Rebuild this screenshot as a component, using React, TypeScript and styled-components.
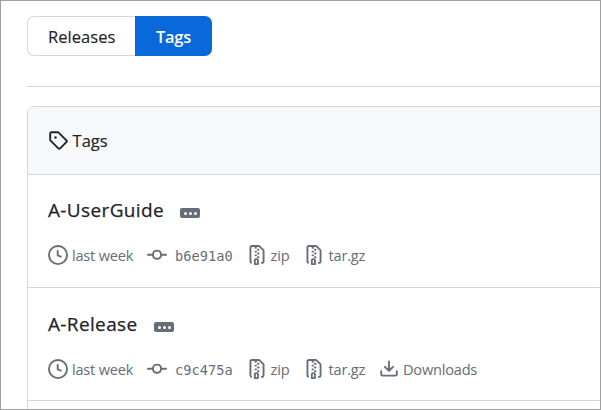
import React from "react";
import styled, { createGlobalStyle } from "styled-components";

const GlobalStyle = createGlobalStyle`
  * { box-sizing: border-box; }
  body {
    margin: 0;
    background: #fff;
    color: #1f2328;
    font-family: "Open Sans", "Noto Sans", sans-serif;
  }
`;

const Frame = styled.main`
  width: 601px;
  height: 410px;
  padding: 15px 0 0 26px;
  border: 1px solid #a0a0a0;
  overflow: hidden;
`;

const Tabs = styled.nav`
  display: flex;
  width: 185px;
  height: 40px;
`;

const Tab = styled.button<{ $active?: boolean }>`
  width: ${(p) => (p.$active ? 77 : 108)}px;
  padding: ${(p) => (p.$active ? "2px 0 0 21px" : "1px 0 0 20px")};
  border: ${(p) => (p.$active ? "0" : "1px solid #d0d7de")};
  border-right: 0;
  border-radius: ${(p) => (p.$active ? "0 7px 7px 0" : "7px 0 0 7px")};
  background: ${(p) => (p.$active ? "#0969da" : "#fff")};
  color: ${(p) => (p.$active ? "#fff" : "#1f2328")};
  font: ${(p) => (p.$active ? 600 : 400)} 16.5px/38px "Open Sans", sans-serif;
  letter-spacing: ${(p) => (p.$active ? -0.3 : 0.05)}px;
  -webkit-text-stroke: ${(p) => (p.$active ? 0 : 0.15)}px;
  text-align: left;
`;

const Divider = styled.hr`
  height: 1px;
  margin: 30px 0 19px;
  border: 0;
  background: #d0d7de;
`;

const Box = styled.section`
  width: 600px;
  height: 330px;
  border: 1px solid #d0d7de;
  border-radius: 7px;
`;

const BoxHeader = styled.header`
  display: flex;
  align-items: center;
  gap: 4.6px;
  height: 68px;
  padding: 0 0 1px 20px;
  border-bottom: 1px solid #d0d7de;
  border-radius: 6px 6px 0 0;
  background: #f6f8fa;
  font-size: 16.5px;
  -webkit-text-stroke: 0.15px;
`;

const Row = styled.article<{ $top: number }>`
  height: 113px;
  padding: ${(p) => p.$top}px 0 0 20px;
  border-bottom: 1px solid #d0d7de;
`;

const TitleLine = styled.div`
  display: flex;
  align-items: center;
  height: 30px;
`;

const Title = styled.h4<{ $width: number }>`
  width: ${(p) => p.$width}px;
  margin: 0;
  font-size: 19px;
  line-height: 30px;
  font-weight: 400;
  letter-spacing: 0.36px;
  -webkit-text-stroke: 0.25px;
  white-space: nowrap;
`;

const More = styled.button`
  display: flex;
  align-items: center;
  justify-content: center;
  gap: 2px;
  width: 20px;
  height: 10px;
  margin-top: 6px;
  padding: 0;
  border: 0;
  border-radius: 2px;
  background: #656d76;
`;

const Dot = styled.span`
  width: 3px;
  height: 3px;
  border-radius: 50%;
  background: #fff;
`;

const Meta = styled.ul`
  display: flex;
  margin: 20px 0 0;
  padding: 0;
  list-style: none;
  color: #656d76;
`;

const MetaItem = styled.li<{ $width: number; $gap: number }>`
  display: flex;
  align-items: center;
  gap: ${(p) => p.$gap}px;
  width: ${(p) => p.$width}px;
  height: 20px;
  font-size: 14.6px;
  letter-spacing: -0.22px;
  line-height: 20px;
  white-space: nowrap;
`;

const Commit = styled.code`
  padding-top: 2px;
  font-family: "DejaVu Sans Mono", monospace;
  font-size: 13.7px;
  letter-spacing: 0;
`;

const Glyph = styled.svg`
  flex: none;
  width: 20px;
  height: 20px;
  fill: currentColor;
`;

const paths = {
  tag: "M1 7.775V2.75C1 1.784 1.784 1 2.75 1h5.025c.464 0 .91.184 1.238.513l6.25 6.25a1.75 1.75 0 0 1 0 2.474l-5.026 5.026a1.75 1.75 0 0 1-2.474 0l-6.25-6.25A1.752 1.752 0 0 1 1 7.775Zm1.5 0c0 .066.026.13.073.177l6.25 6.25a.25.25 0 0 0 .354 0l5.025-5.025a.25.25 0 0 0 0-.354l-6.25-6.25a.25.25 0 0 0-.177-.073H2.75a.25.25 0 0 0-.25.25ZM6 5a1 1 0 1 1 0 2 1 1 0 0 1 0-2Z",
  clock: "M8 0a8 8 0 1 1 0 16A8 8 0 0 1 8 0ZM1.5 8a6.5 6.5 0 1 0 13 0 6.5 6.5 0 0 0-13 0Zm7-3.25v2.992l2.028.812a.75.75 0 0 1-.557 1.392l-2.5-1A.751.751 0 0 1 7 8.25v-3.5a.75.75 0 0 1 1.5 0Z",
  commit: "M11.93 8.5a4.002 4.002 0 0 1-7.86 0H.75a.75.75 0 0 1 0-1.5h3.32a4.002 4.002 0 0 1 7.86 0h3.32a.75.75 0 0 1 0 1.5Zm-1.43-.75a2.5 2.5 0 1 0-5 0 2.5 2.5 0 0 0 5 0Z",
  zip: "M3.5 1.75v11.5c0 .09.048.173.126.217a.75.75 0 0 1-.752 1.298A1.748 1.748 0 0 1 2 13.25V1.75C2 .784 2.784 0 3.75 0h5.586c.464 0 .909.185 1.237.513l2.914 2.914c.329.328.513.773.513 1.237v8.586A1.75 1.75 0 0 1 12.25 15h-.5a.75.75 0 0 1 0-1.5h.5a.25.25 0 0 0 .25-.25V4.664a.25.25 0 0 0-.073-.177L9.513 1.573a.25.25 0 0 0-.177-.073H7.25a.75.75 0 0 1 0 1.5h-.5a.75.75 0 0 1 0-1.5h-3a.25.25 0 0 0-.25.25Zm3.75 8.75h.5c.966 0 1.75.784 1.75 1.75v3a.75.75 0 0 1-.75.75h-2.5a.75.75 0 0 1-.75-.75v-3c0-.966.784-1.75 1.75-1.75ZM6 5.25a.75.75 0 0 1 .75-.75h.5a.75.75 0 0 1 0 1.5h-.5A.75.75 0 0 1 6 5.25Zm.75 2.25h.5a.75.75 0 0 1 0 1.5h-.5a.75.75 0 0 1 0-1.5ZM8 6.75A.75.75 0 0 1 8.75 6h.5a.75.75 0 0 1 0 1.5h-.5A.75.75 0 0 1 8 6.75ZM8.75 3h.5a.75.75 0 0 1 0 1.5h-.5a.75.75 0 0 1 0-1.5ZM8 9.75A.75.75 0 0 1 8.75 9h.5a.75.75 0 0 1 0 1.5h-.5A.75.75 0 0 1 8 9.75Zm-1 2.5v2.25h1v-2.25a.25.25 0 0 0-.25-.25h-.5a.25.25 0 0 0-.25.25Z",
  download: "M2.75 14A1.75 1.75 0 0 1 1 12.25v-2.5a.75.75 0 0 1 1.5 0v2.5c0 .138.112.25.25.25h10.5a.25.25 0 0 0 .25-.25v-2.5a.75.75 0 0 1 1.5 0v2.5A1.75 1.75 0 0 1 13.25 14ZM7.25 7.689V2a.75.75 0 0 1 1.5 0v5.689l1.97-1.969a.749.749 0 1 1 1.06 1.06l-3.25 3.25a.749.749 0 0 1-1.06 0L4.22 6.78a.749.749 0 1 1 1.06-1.06l1.97 1.969Z",
};

const Icon = ({ name }: { name: keyof typeof paths }) => (
  <Glyph viewBox="0 0 16 16" aria-hidden="true">
    <path d={paths[name]} stroke="none" />
  </Glyph>
);

type TagRowProps = {
  name: string;
  titleWidth: number;
  commit: string;
  top: number;
  downloads?: boolean;
};

const TagRow = ({ name, titleWidth, commit, top, downloads }: TagRowProps) => (
  <Row $top={top}>
    <TitleLine>
      <Title $width={titleWidth}>{name}</Title>
      <More aria-label="More">
        <Dot />
        <Dot />
        <Dot />
      </More>
    </TitleLine>
    <Meta>
      <MetaItem $width={99} $gap={4}><Icon name="clock" />last week</MetaItem>
      <MetaItem $width={99.6} $gap={8}><Icon name="commit" /><Commit>{commit}</Commit></MetaItem>
      <MetaItem $width={57} $gap={4}><Icon name="zip" />zip</MetaItem>
      <MetaItem $width={75.4} $gap={5}><Icon name="zip" />tar.gz</MetaItem>
      {downloads && <MetaItem $width={110} $gap={4}><Icon name="download" />Downloads</MetaItem>}
    </Meta>
  </Row>
);

export default function App() {
  return (
    <>
      <GlobalStyle />
      <Frame>
        <Tabs>
          <Tab>Releases</Tab>
          <Tab $active>Tags</Tab>
        </Tabs>
        <Divider />
        <Box>
          <BoxHeader><Icon name="tag" />Tags</BoxHeader>
          <TagRow name="A-UserGuide" titleWidth={132} commit="b6e91a0" top={20} />
          <TagRow name="A-Release" titleWidth={106} commit="c9c475a" top={21} downloads />
        </Box>
      </Frame>
    </>
  );
}
